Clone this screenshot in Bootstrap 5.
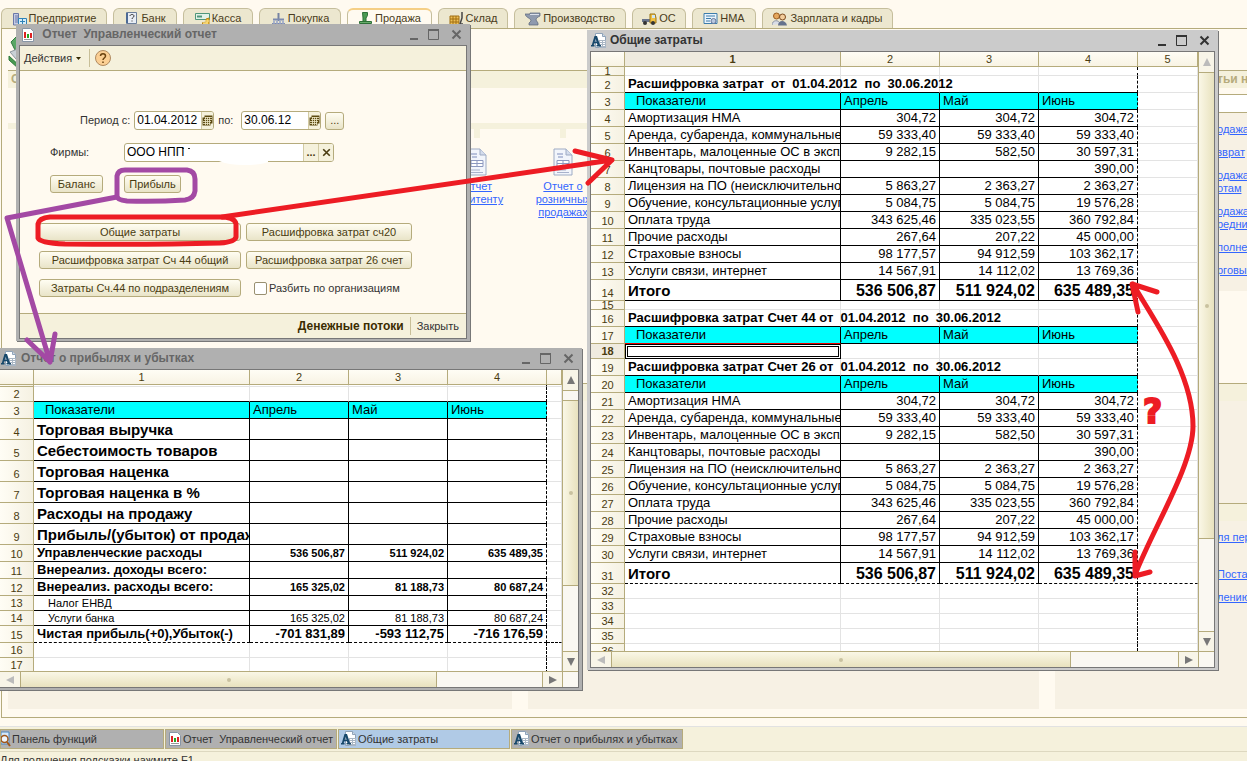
<!DOCTYPE html>
<html lang="ru">
<head>
<meta charset="utf-8">
<meta name="viewport" content="width=device-width, initial-scale=1">
<title>Управленческий отчет</title>
<link rel="stylesheet" href="https://cdn.jsdelivr.net/npm/bootstrap@5.3.0/dist/css/bootstrap.min.css">
<style>
:root{--cream:#fffaf0;--band:#f5f1dc;--beige:#f7f1e4;--line:#b5ab7c;--ink:#4a3c10}
body{font:11px/13px "Liberation Sans",Arial,sans-serif;color:#333;background:var(--cream)}
button,input{font:inherit;color:inherit}
a{color:#3366ff}
svg{flex:none;display:block}

/* section tabs */
.tabstrip{height:28px;padding:8px 0 0 1px;gap:6px}
.tabstrip .nav-link{height:20px;padding:3px 0 0;gap:2px;color:#4a3c20;background:#ece7cf;border:1px solid #c5be9c;border-bottom:0;border-radius:6px 6px 0 0;display:flex;justify-content:center;white-space:nowrap}
.tabstrip .nav-link.active{background:var(--cream);color:#4a3c20;border-top:2px solid #f5cf85;padding-top:2px;height:21px}
.w54{width:54px}.w64{width:64px}.w70{width:70px}.w82{width:82px}.w85{width:85px}.w106{width:106px}.w112{width:112px}.w131{width:131px}

/* function panel behind the windows */
.panel{margin-left:1px;border:1px solid var(--line);border-right:0;padding:0 0 8px 6px;gap:16px;min-height:0}
.band{background:var(--band);border-top:1px solid var(--line);color:var(--line);font-weight:700;font-size:12px;height:18px;line-height:17px;padding-left:3px;white-space:nowrap;flex:none}
.headrow{height:41px;padding-top:6px;flex:none}
.leftpart{flex:1031}
.rightpart{flex:192;overflow:hidden}
.flowmap{height:295px;padding-top:35px}
.flowmap .rail{border-top:6px solid var(--band);padding-left:426px}
.flowmap .stop{width:86px;text-align:center}
.flowmap .stop::before{content:"";display:block;width:6px;height:9px;background:var(--band);margin:0 auto 10px}
.flowmap .stop svg{margin:0 auto 4px}
.lists{gap:16px}
.fill{background:var(--beige)}
.lists a,.rightpart a{display:block;white-space:nowrap}
.rightpart .links{padding:10px 0 0 162px}
.rightpart .links a{margin-bottom:10px}
.blank{background:#fff;border:solid var(--line);border-width:1px 0;height:19px;margin-top:6px}

/* task bar and status bar */
.taskbar{background:var(--band);border-top:1px solid #e2e2e2;padding-top:2px;height:25px;gap:1px}
.taskbar button{width:172px;height:20px;border:1px solid var(--line);background:#b0b0b0;color:#333;padding:0 2px;gap:1px;text-align:left;white-space:nowrap}
.taskbar button:first-child{width:164px;padding-left:0}
.taskbar button.on{background:#b0cae6}
.status{height:10px;border-top:1px solid #ddd8c0;background:var(--band);line-height:17px;white-space:nowrap;overflow:hidden}

/* windows */
.win{position:absolute;background:#b0b0b0;padding:0 3px 2px;box-shadow:1px 1px 0 #777}
.win.front{background:#cbcbcb}
.win .titlebar{height:21px;color:#666;font-size:12px;font-weight:700;gap:4px;padding:0 5px 0 2px;white-space:nowrap}
.win.front .titlebar{color:#333;gap:3px;padding-left:1px}
.win .titlebar button{border:0;background:none;padding:0;width:11px;height:11px}
.client{border:1px solid #777;background:var(--cream)}
#w-form{left:16px;top:24px;width:454px}
#w-cost{left:587px;top:30px;width:631px}
#w-profit{left:-4px;top:348px;width:586px}

/* report form */
.toolbar{height:25px;background:var(--band);border-bottom:1px solid var(--line);padding:0 4px}
.toolbar button,.foot button{border:0;background:none;padding:0;white-space:nowrap}
.sep{width:1px;height:18px;background:#c8bf98}
.fbody{padding:40px 19px 16px}
.fbody label{white-space:nowrap}
.field{height:19px;border:1px solid var(--line);border-radius:3px;background:#fff;overflow:hidden}
.field input{border:0;padding:0 2px;min-width:0;background:none;color:#000;outline:0;font-size:12px}
.field button{border:0;border-left:1px solid #d3cba4;background:#f5f1dc;width:15px;padding:0;color:var(--ink);font-weight:700}
.btn1c{height:18px;border:1px solid var(--line);border-radius:3px;background:linear-gradient(#fffdf2,#e9e4c8);color:var(--ink);padding:0;white-space:nowrap;line-height:15px}
.date{width:80px}.firm{width:210px}.bw18{width:19px}.bw52{width:53px}.bw56{width:57px}.bw202{width:202px}.bw166{width:166px}
.form-check-input.org{width:13px;height:13px;margin:0;border:1px solid #999071;border-radius:2px}
.foot{height:25px;border-top:1px solid var(--line);background:var(--band);padding:0 7px;gap:6px}
.foot b{font-size:12px;color:#3b2c00}

/* spreadsheets */
.sheet{overflow:hidden;background:#fff;min-width:0}
.grid{table-layout:fixed;border-collapse:separate;border-spacing:0;width:100%;color:#000;font-size:13px;line-height:16px}
.grid th,.grid td{padding:0 3px;overflow:hidden;white-space:nowrap;border:solid #e3e3e3;border-width:0 1px 1px 0;vertical-align:bottom;text-align:right}
.grid th{background:linear-gradient(90deg,#fffdf5,#f5f1e2);border-color:var(--line);font-size:11px;font-weight:400;text-align:center;color:var(--ink);line-height:14px}
.grid thead th{background:linear-gradient(#fffdf5,#f8f3e4);height:15px;line-height:14px}
.grid tr .sel{font-weight:700;background:#efebdf}
.grid td:nth-child(2){text-align:left}
.grid td:nth-child(5){border-right:1px dashed #000}
.h2 th,.h2 td{height:2px;line-height:1px}
.h9 th,.h9 td{height:9px;line-height:8px}
.grid .h9 th{line-height:7px}
.h15 th,.h15 td{height:15px;line-height:14px}
.h17 th,.h17 td{height:17px}
.h21 th,.h21 td{height:21px}
.k td:nth-child(n+2):nth-child(-n+5){border-bottom-color:#000}
.k td:nth-child(n+2):nth-child(-n+4){border-right-color:#000}
.grid .cy td:nth-child(n+2):nth-child(-n+5){background:#0ff;text-align:left}
.grid .cy td:nth-child(2){padding-left:11px}
.grid .top td:nth-child(n+2):nth-child(-n+5){border-bottom-color:#000}
.grid .cap td:nth-child(2){overflow:visible;font-weight:700}
.total td{font-weight:700;font-size:16px;line-height:19px}
.total td:nth-child(2),.big td{font-weight:700;font-size:15px;line-height:19px}
.grid .dash td{border-bottom:1px dashed #000}
.bld td{font-weight:700;font-size:11px}
.bld td:nth-child(2),.net td{font-weight:700;font-size:13px}
.sm td{font-size:11px}
.grid .sm td:nth-child(2){padding-left:14px}
.grid .cur{border:1px solid #000;box-shadow:inset 0 0 0 1px #fff,inset 0 0 0 2px #000}
.grid .cy td.redline{border-bottom-color:#e00}
.c-n{width:34px}.c-1{width:216px}.c-v{width:99px}

.vbar{flex:none;width:16px;border-left:1px solid var(--line);background:#faf8f2}
.hbar{height:16px;border-top:1px solid var(--line);background:#faf8f2}
.vbar button,.hbar button{border:0;padding:0;background:#f8f5e8;display:flex;align-items:center;justify-content:center}
.vbar button{height:20px}
.hbar button{width:20px}
.vbar .thumb{background:linear-gradient(90deg,#faf7e6,#e8e2be);border:solid var(--line);border-width:1px 0}
.hbar .thumb{background:linear-gradient(#faf7e6,#e8e2be);border:solid var(--line);border-width:0 1px}
.vbar button:last-child{border-top:1px solid var(--line)}
.hbar button:nth-child(3){border-left:1px solid var(--line)}
.dot{width:4px;height:4px;border-radius:2px;background:#c9c2a0}
#w-cost .sheet{height:599px}#w-profit .sheet{height:301px}
#w-cost .vbar .thumb{height:467px}
#w-profit .vbar .track{height:10px;border-top:1px solid var(--line)}
#w-profit .vbar .thumb{height:186px}
#w-cost .hbar .thumb{width:460px}
#w-profit .hbar .thumb{width:417px}
.corner{width:16px;border-left:1px solid var(--line)}

/* hand-drawn notes */
.notes{position:absolute;left:0;top:0;pointer-events:none;fill:none;stroke-linecap:round;stroke-linejoin:round}
.query{position:absolute;left:1143px;top:394px;font:700 33px/36px "DejaVu Sans",sans-serif;color:#ed1c24;-webkit-text-stroke:2px #ed1c24}
</style>
</head>
<body class="vh-100 d-flex flex-column overflow-hidden position-relative">

<svg width="0" height="0" class="position-absolute" aria-hidden="true">
  <symbol id="i-sheet" viewBox="0 0 16 16"><path d="M4.500.500h7l3 3v11h-10z" fill="#fff" stroke="#8fa3b8"/><path d="M11.500.500v3h3" fill="#cfdbe8" stroke="#8fa3b8"/><path d="M8 7h7v8H8z" fill="#a9b6c4"/><path d="M9 8h2v1H9zM12 8h2v1h-2zM9 10h2v1H9zM12 10h2v1h-2zM9 12h2v1H9zM12 12h2v1h-2z" fill="#fff"/><path d="M3.500 3h2.500l3 9h1v1.500H5.500V12h1l-.600-1.800H3.300L2.700 12h.800v1.500H0V12h.800zM4.600 5.500L3.700 8.800h1.800z" fill="#17486b" fill-rule="evenodd"/></symbol>
  <symbol id="i-chart" viewBox="0 0 14 14"><path d="M1.500.500h8l3 3v10h-11z" fill="#fff" stroke="#8795a5"/><path d="M4 4v6" stroke="#d22" stroke-width="2"/><path d="M7 6v4" stroke="#2a2" stroke-width="2"/><path d="M10 5v5" stroke="#d22" stroke-width="2"/><path d="M3 11.500h8" stroke="#999"/></symbol>
  <symbol id="i-doc" viewBox="0 0 22 28"><path d="M2 1h12l6 6v20H2z" fill="#f2f5fb" stroke="#9eabc4"/><path d="M14 1v6h6" fill="#d4dcec" stroke="#9eabc4"/><path d="M5 6h6M6 9h5" stroke="#7f8dbb"/><path d="M5 12.500h12v6H5zM5 15.500h12M11 12.500v6" fill="#fff" stroke="#8c98bf"/><path d="M5 22h9M5 24.500h12" stroke="#a8b2cc"/></symbol>
  <symbol id="i-min" viewBox="0 0 11 11"><path d="M1 10h8" stroke="currentColor" stroke-width="2"/></symbol>
  <symbol id="i-max" viewBox="0 0 11 11"><path d="M.500 1v9.500h10V1" stroke="currentColor" fill="none"/><path d="M0 1h11" stroke="currentColor" stroke-width="2"/></symbol>
  <symbol id="i-x" viewBox="0 0 11 11"><path d="M1.500 1.500l8 8m0-8l-8 8" stroke="currentColor" stroke-width="2"/></symbol>
  <symbol id="i-cal" viewBox="0 0 11 11"><path d="M2.500.500h8v8h-2v2h-8v-8h2z" fill="#5c4a12"/><path d="M2 4.500h8M1 6.500h8M1 8.500h7M3.500 2v8M5.500 2v8M7.500 2v8M3 2.500h7" stroke="#efe9c8" stroke-width=".8"/></symbol>
</svg>

<nav class="tabstrip nav flex-nowrap flex-shrink-0">
  <a class="nav-link w106" href="#"><svg width="15" height="14" viewBox="0 0 15 14"><path d="M1.500 13V1.500h5V13z" fill="#c4cbe4" stroke="#6b78a8"/><path d="M3 4h3M3 6h3M3 8h3M3 10h3" stroke="#6b78a8"/><path d="M6.500 13V6.500h8V13z" fill="#d6ecf8" stroke="#2f83b8"/><path d="M8 9.500h5M10.500 7v6" stroke="#2f83b8"/></svg>Предприятие</a>
  <a class="nav-link w64" href="#"><svg width="15" height="13" viewBox="0 0 15 13"><path d="M2.500.500h10v11h-10z" fill="#e8edf5" stroke="#6c7f9b"/><path d="M3 1v10" stroke="#4c6a95" stroke-width="2"/><path d="M6 4c0-2 4-2 4 0 0 1.500-2 1.500-2 3M8 8.500v1" stroke="#333" fill="none"/></svg>Банк</a>
  <a class="nav-link w70" href="#"><svg width="15" height="14" viewBox="0 0 15 14"><path d="M.500 1.500h14v6H.500z" fill="#e2f2e8" stroke="#4f977a"/><path d="M2 4.500h5" stroke="#4f977a" stroke-width="2"/><path d="M7 11l2 2h5V6l-3 1v3z" fill="#f2bd39" stroke="#ba8413"/><path d="M8 11h5M10 9h4" stroke="#fff0a8"/></svg>Касса</a>
  <a class="nav-link w82" href="#"><svg width="15" height="14" viewBox="0 0 15 14"><path d="M7.500 1v8" stroke="#7683a3" stroke-width="2"/><path d="M2 7.500h11M1 12h13" stroke="#7d8bb0" stroke-width="2"/><path d="M2 10h12" stroke="#a9b3cb" stroke-dasharray="2 1" stroke-width="3"/></svg>Покупка</a>
  <a class="nav-link active w85" href="#"><svg width="15" height="14" viewBox="0 0 15 14"><path d="M4.500.500h5v3L8 6v3.500H5V6z" fill="#4a9a52" stroke="#2e7038"/><path d="M1.500 9.500h12v2h-12z" fill="#68ae6c" stroke="#2e7038"/></svg>Продажа</a>
  <a class="nav-link w70" href="#"><svg width="15" height="14" viewBox="0 0 15 14"><path d="M1 4h9v9H1z" fill="#efc057" stroke="#a06e12"/><path d="M1 7h9M1 10h9M4 4v9M7 4v9" stroke="#a06e12"/><path d="M13 0v6l-2 6h3" stroke="#444" stroke-width="1.500" fill="none"/></svg>Склад</a>
  <a class="nav-link w112" href="#"><svg width="16" height="14" viewBox="0 0 16 14"><path d="M0 2h5V1h10v3c-2 1-4 2-4 4l2 3v2H4v-2l2-2c0-3-5-3-6-7z" fill="#8f9aae" stroke="#59647a" stroke-width=".7"/><path d="M5 2.500h9" stroke="#dbe0ea"/></svg>Производство</a>
  <a class="nav-link w54" href="#"><svg width="15" height="14" viewBox="0 0 15 14"><path d="M0 7h8v3H0z" fill="#68748c"/><path d="M8 2h5l1 4v5H8z" fill="#f0c044" stroke="#9b7414"/><path d="M10 3h3v3h-3z" fill="#cfe6f5"/><circle cx="3" cy="11" r="2" fill="#333"/><circle cx="11" cy="11" r="2" fill="#333"/></svg>ОС</a>
  <a class="nav-link w64" href="#"><svg width="15" height="14" viewBox="0 0 15 14"><path d="M1 1.500h13v10H1z" fill="#e9f3fb" stroke="#3c7dac"/><path d="M3 4h9M3 6.500h5M3 9h4" stroke="#3c7dac"/><circle cx="10.500" cy="9" r="2.500" fill="#b8c8e0" stroke="#68799c"/></svg>НМА</a>
  <a class="nav-link w131" href="#"><svg width="16" height="14" viewBox="0 0 16 14"><circle cx="4.500" cy="4" r="3" fill="#e5a75e" stroke="#9a5d20"/><path d="M0 13c0-5 7-6 8-1" fill="#d9dde6" stroke="#8e96a6"/><circle cx="10.500" cy="5" r="3" fill="#f3cd9c" stroke="#7c4a1e"/><path d="M6 13.500c0-6 8-6 9 0z" fill="#65728c"/></svg>Зарплата и кадры</a>
</nav>

<main class="panel d-flex flex-grow-1">
  <section class="leftpart d-flex flex-column">
    <div class="headrow"><svg width="28" height="34" viewBox="0 0 28 34"><path d="M3 7l6-6 9 8-9 10z" fill="#5aa765" stroke="#2f7a3f"/><path d="M2 17l10-4 12 12-10 6z" fill="#c9d0d6" stroke="#8e979f"/><path d="M1 21l12 11 12-8v4l-10 6H11L1 25z" fill="#4a9a52" stroke="#2f7a3f"/></svg></div>
    <div class="band">Операции</div>
    <div class="flowmap flex-shrink-0">
      <div class="rail d-flex">
        <div class="stop"><svg width="22" height="28"><use href="#i-doc"/></svg><a href="#">Отчет<br>комитенту</a></div>
        <div class="stop"><svg width="22" height="28"><use href="#i-doc"/></svg><a href="#">Отчет о<br>розничных<br>продажах</a></div>
      </div>
    </div>
    <div class="lists d-flex flex-grow-1">
      <div class="fill" style="flex:504"><div class="band"></div></div>
      <div class="fill" style="flex:511"><div class="band"></div></div>
    </div>
  </section>
  <section class="rightpart d-flex flex-column">
    <div class="headrow"></div>
    <div class="band" style="padding-left:162px">тьи н</div>
    <div class="blank flex-shrink-0"></div>
    <div class="fill links flex-shrink-0" style="height:178px">
      <a href="#">одажа</a><a href="#">зврат </a><a href="#">одажа<br>отам</a><a href="#">одажа<br>редни</a><a href="#">полне</a><a href="#">рговые</a>
    </div>
    <div class="flex-shrink-0" style="height:92px"></div>
    <div class="fill flex-shrink-0" style="height:120px"><div class="band"></div></div>
    <div class="fill flex-grow-1"><div class="band"></div>
      <div class="links"><a href="#">ля пер</a><a href="#" class="mt-4">Постан</a><a href="#">лению</a></div>
    </div>
  </section>
</main>

<footer class="flex-shrink-0 pt-2">
  <div class="taskbar d-flex">
    <button type="button" class="d-flex align-items-center"><svg width="10" height="16" viewBox="0 0 10 16"><path d="M0 1h8v12H0z" fill="#d7e8f8" stroke="#4d86c0"/><circle cx="3.500" cy="8" r="3.500" fill="#eef6ff" stroke="#a0571c" stroke-width="1.500"/><path d="M6 11l3 4" stroke="#a0571c" stroke-width="2"/></svg>Панель функций</button>
    <button type="button" class="d-flex align-items-center"><svg width="14" height="14"><use href="#i-chart"/></svg>Отчет&nbsp; Управленческий отчет</button>
    <button type="button" class="d-flex align-items-center on"><svg width="16" height="16"><use href="#i-sheet"/></svg>Общие затраты</button>
    <button type="button" class="d-flex align-items-center"><svg width="16" height="16"><use href="#i-sheet"/></svg>Отчет о прибылях и убытках</button>
  </div>
  <div class="status">Для получения подсказки нажмите F1</div>
</footer>

<section class="win" id="w-form">
  <div class="titlebar d-flex align-items-center">
    <svg width="14" height="14"><use href="#i-chart"/></svg><span class="flex-grow-1">&nbsp;Отчет&nbsp; Управленческий отчет</span>
    <div class="d-flex gap-2"><button type="button" aria-label="Свернуть"><svg width="11" height="11"><use href="#i-min"/></svg></button><button type="button" aria-label="Развернуть"><svg width="11" height="11"><use href="#i-max"/></svg></button><button type="button" aria-label="Закрыть окно" class="ms-1"><svg width="11" height="11"><use href="#i-x"/></svg></button></div>
  </div>
  <form class="client">
    <div class="toolbar d-flex align-items-center gap-1">
      <button type="button" class="d-flex align-items-center gap-1">Действия <svg width="5" height="3"><path d="M0 0h5L2.500 3z" fill="#332800"/></svg></button>
      <div class="sep ms-1"></div>
      <button type="button" aria-label="Справка"><svg width="18" height="18" viewBox="0 0 18 18"><circle cx="9" cy="9" r="7.500" fill="#fbcf94" stroke="#b08a60"/><path d="M6.500 7c0-3 5-3 5 0 0 2-2.500 2-2.500 4M9 12.500v1.500" stroke="#6b4310" stroke-width="1.500" fill="none"/></svg></button>
    </div>
    <div class="fbody">
      <div class="d-flex align-items-center" style="padding-left:41px">
        <label for="d1" class="pe-1">Период с:</label>
        <div class="field date d-flex"><input id="d1" class="flex-grow-1" value="01.04.2012"><button type="button" aria-label="Выбрать дату начала" class="d-flex align-items-center justify-content-center"><svg width="11" height="11"><use href="#i-cal"/></svg></button></div>
        <label for="d2" class="ps-1 pe-2">по:</label>
        <div class="field date d-flex"><input id="d2" class="flex-grow-1" value="30.06.12"><button type="button" aria-label="Выбрать дату конца" class="d-flex align-items-center justify-content-center"><svg width="11" height="11"><use href="#i-cal"/></svg></button></div>
        <button type="button" class="btn1c bw18 ms-1">...</button>
      </div>
      <div class="d-flex align-items-center" style="padding:13px 0 13px 11px">
        <label for="firm" style="width:74px">Фирмы:</label>
        <div class="field firm d-flex"><input id="firm" class="flex-grow-1" value="ООО НПП"><button type="button">...</button><button type="button" aria-label="Очистить" class="d-flex align-items-center justify-content-center"><svg width="9" height="9" viewBox="0 0 11 11"><use href="#i-x"/></svg></button></div>
      </div>
      <div class="d-flex" style="padding:0 0 30px 11px;gap:21px"><button type="button" class="btn1c bw52">Баланс</button><button type="button" class="btn1c bw56">Прибыль</button></div>
      <div class="d-flex flex-column" style="gap:10px">
        <div class="d-flex" style="gap:5px"><button type="button" class="btn1c bw202">Общие затраты</button><button type="button" class="btn1c bw166">Расшифровка затрат сч20</button></div>
        <div class="d-flex" style="gap:5px"><button type="button" class="btn1c bw202">Расшифровка затрат Сч 44 общий</button><button type="button" class="btn1c bw166">Расшифровка затрат 26 счет</button></div>
        <div class="d-flex align-items-center" style="gap:13px"><button type="button" class="btn1c bw202">Затраты Сч.44 по подразделениям</button><div class="d-flex align-items-center" style="gap:2px"><input type="checkbox" id="org" class="form-check-input org"><label for="org">Разбить по организациям</label></div></div>
      </div>
    </div>
    <div class="foot d-flex align-items-center justify-content-end"><button type="button"><b>Денежные потоки</b></button><div class="sep"></div><button type="button">Закрыть</button></div>
  </form>
</section>

<section class="win" id="w-profit">
  <div class="titlebar d-flex align-items-center">
    <svg width="16" height="16"><use href="#i-sheet"/></svg><span class="flex-grow-1">Отчет о прибылях и убытках</span>
    <div class="d-flex gap-2"><button type="button" aria-label="Свернуть"><svg width="11" height="11"><use href="#i-min"/></svg></button><button type="button" aria-label="Развернуть"><svg width="11" height="11"><use href="#i-max"/></svg></button><button type="button" aria-label="Закрыть окно" class="ms-1"><svg width="11" height="11"><use href="#i-x"/></svg></button></div>
  </div>
  <div class="client">
    <div class="d-flex">
      <div class="sheet flex-grow-1">
        <table class="grid">
          <colgroup><col class="c-n"><col class="c-1"><col class="c-v"><col class="c-v"><col class="c-v"><col></colgroup>
          <thead><tr><th></th><th>1</th><th>2</th><th>3</th><th>4</th><th></th></tr></thead>
          <tbody>
            <tr class="h2"><th></th><td></td><td></td><td></td><td></td><td></td></tr>
            <tr class="h15 top"><th>2</th><td></td><td></td><td></td><td></td><td></td></tr>
            <tr class="h17 k cy"><th>3</th><td>Показатели</td><td>Апрель</td><td>Май</td><td>Июнь</td><td></td></tr>
            <tr class="h21 k big"><th>4</th><td>Торговая выручка</td><td></td><td></td><td></td><td></td></tr>
            <tr class="h21 k big"><th>5</th><td>Себестоимость товаров</td><td></td><td></td><td></td><td></td></tr>
            <tr class="h21 k big"><th>6</th><td>Торговая наценка</td><td></td><td></td><td></td><td></td></tr>
            <tr class="h21 k big"><th>7</th><td>Торговая наценка в %</td><td></td><td></td><td></td><td></td></tr>
            <tr class="h21 k big"><th>8</th><td>Расходы на продажу</td><td></td><td></td><td></td><td></td></tr>
            <tr class="h21 k big"><th>9</th><td>Прибыль/(убыток) от продаж</td><td></td><td></td><td></td><td></td></tr>
            <tr class="h17 k bld"><th>10</th><td>Управленческие расходы</td><td>536 506,87</td><td>511 924,02</td><td>635 489,35</td><td></td></tr>
            <tr class="h17 k bld"><th>11</th><td>Внереализ. доходы всего:</td><td></td><td></td><td></td><td></td></tr>
            <tr class="h17 k bld"><th>12</th><td>Внереализ. расходы всего:</td><td>165 325,02</td><td>81 188,73</td><td>80 687,24</td><td></td></tr>
            <tr class="h15 k sm"><th>13</th><td>Налог ЕНВД</td><td></td><td></td><td></td><td></td></tr>
            <tr class="h15 k sm"><th>14</th><td>Услуги банка</td><td>165 325,02</td><td>81 188,73</td><td>80 687,24</td><td></td></tr>
            <tr class="h17 k net dash"><th>15</th><td>Чистая прибыль(+0),Убыток(-)</td><td>-701 831,89</td><td>-593 112,75</td><td>-716 176,59</td><td></td></tr>
            <tr class="h15"><th>16</th><td></td><td></td><td></td><td></td><td></td></tr>
            <tr class="h15"><th>17</th><td></td><td></td><td></td><td></td><td></td></tr>
          </tbody>
        </table>
      </div>
      <div class="vbar d-flex flex-column"><button type="button" aria-label="Вверх"><svg width="8" height="8"><path d="M4 0l4 8H0z" fill="#777"/></svg></button><div class="track"></div><div class="thumb d-flex align-items-center justify-content-center"><div class="dot"></div></div><button type="button" aria-label="Вниз" class="mt-auto"><svg width="8" height="8"><path d="M4 8l4-8H0z" fill="#777"/></svg></button></div>
    </div>
    <div class="hbar d-flex"><button type="button" aria-label="Влево"><svg width="8" height="8"><path d="M0 4l8-4v8z" fill="#bbb"/></svg></button><div class="thumb d-flex align-items-center justify-content-center"><div class="dot"></div></div><button type="button" aria-label="Вправо" class="ms-auto"><svg width="8" height="8"><path d="M8 4L0 0v8z" fill="#777"/></svg></button><div class="corner"></div></div>
  </div>
</section>

<section class="win front" id="w-cost">
  <div class="titlebar d-flex align-items-center">
    <svg width="16" height="16"><use href="#i-sheet"/></svg><span class="flex-grow-1">Общие затраты</span>
    <div class="d-flex gap-2"><button type="button" aria-label="Свернуть"><svg width="11" height="11"><use href="#i-min"/></svg></button><button type="button" aria-label="Развернуть"><svg width="11" height="11"><use href="#i-max"/></svg></button><button type="button" aria-label="Закрыть окно" class="ms-1"><svg width="11" height="11"><use href="#i-x"/></svg></button></div>
  </div>
  <div class="client">
    <div class="d-flex">
      <div class="sheet flex-grow-1">
        <table class="grid">
          <colgroup><col class="c-n"><col class="c-1"><col class="c-v"><col class="c-v"><col class="c-v"><col></colgroup>
          <thead><tr><th></th><th class="sel">1</th><th>2</th><th>3</th><th>4</th><th>5</th></tr></thead>
          <tbody>
            <tr class="h9"><th>1</th><td></td><td></td><td></td><td></td><td></td></tr>
            <tr class="h17 cap top"><th>2</th><td>Расшифровка затрат&nbsp; от&nbsp; 01.04.2012&nbsp; по&nbsp; 30.06.2012</td><td></td><td></td><td></td><td></td></tr>
            <tr class="h17 k cy"><th>3</th><td>Показатели</td><td>Апрель</td><td>Май</td><td>Июнь</td><td></td></tr>
            <tr class="h17 k"><th>4</th><td>Амортизация НМА</td><td>304,72</td><td>304,72</td><td>304,72</td><td></td></tr>
            <tr class="h17 k"><th>5</th><td>Аренда, субаренда, коммунальные</td><td>59 333,40</td><td>59 333,40</td><td>59 333,40</td><td></td></tr>
            <tr class="h17 k"><th>6</th><td>Инвентарь, малоценные ОС в экспл</td><td>9 282,15</td><td>582,50</td><td>30 597,31</td><td></td></tr>
            <tr class="h17 k"><th>7</th><td>Канцтовары, почтовые расходы</td><td></td><td></td><td>390,00</td><td></td></tr>
            <tr class="h17 k"><th>8</th><td>Лицензия на ПО (неисключительно</td><td>5 863,27</td><td>2 363,27</td><td>2 363,27</td><td></td></tr>
            <tr class="h17 k"><th>9</th><td>Обучение, консультационные услуг</td><td>5 084,75</td><td>5 084,75</td><td>19 576,28</td><td></td></tr>
            <tr class="h17 k"><th>10</th><td>Оплата труда</td><td>343 625,46</td><td>335 023,55</td><td>360 792,84</td><td></td></tr>
            <tr class="h17 k"><th>11</th><td>Прочие расходы</td><td>267,64</td><td>207,22</td><td>45 000,00</td><td></td></tr>
            <tr class="h17 k"><th>12</th><td>Страховые взносы</td><td>98 177,57</td><td>94 912,59</td><td>103 362,17</td><td></td></tr>
            <tr class="h17 k"><th>13</th><td>Услуги связи, интернет</td><td>14 567,91</td><td>14 112,02</td><td>13 769,36</td><td></td></tr>
            <tr class="h21 k total"><th>14</th><td>Итого</td><td>536 506,87</td><td>511 924,02</td><td>635 489,35</td><td></td></tr>
            <tr class="h9"><th>15</th><td></td><td></td><td></td><td></td><td></td></tr>
            <tr class="h17 cap top"><th>16</th><td>Расшифровка затрат Счет 44 от&nbsp; 01.04.2012&nbsp; по&nbsp; 30.06.2012</td><td></td><td></td><td></td><td></td></tr>
            <tr class="h17 k cy"><th>17</th><td class="redline">Показатели</td><td>Апрель</td><td>Май</td><td>Июнь</td><td></td></tr>
            <tr class="h15"><th class="sel">18</th><td class="cur"></td><td></td><td></td><td></td><td></td></tr>
            <tr class="h17 cap top"><th>19</th><td>Расшифровка затрат Счет 26 от&nbsp; 01.04.2012&nbsp; по&nbsp; 30.06.2012</td><td></td><td></td><td></td><td></td></tr>
            <tr class="h17 k cy"><th>20</th><td>Показатели</td><td>Апрель</td><td>Май</td><td>Июнь</td><td></td></tr>
            <tr class="h17 k"><th>21</th><td>Амортизация НМА</td><td>304,72</td><td>304,72</td><td>304,72</td><td></td></tr>
            <tr class="h17 k"><th>22</th><td>Аренда, субаренда, коммунальные</td><td>59 333,40</td><td>59 333,40</td><td>59 333,40</td><td></td></tr>
            <tr class="h17 k"><th>23</th><td>Инвентарь, малоценные ОС в экспл</td><td>9 282,15</td><td>582,50</td><td>30 597,31</td><td></td></tr>
            <tr class="h17 k"><th>24</th><td>Канцтовары, почтовые расходы</td><td></td><td></td><td>390,00</td><td></td></tr>
            <tr class="h17 k"><th>25</th><td>Лицензия на ПО (неисключительно</td><td>5 863,27</td><td>2 363,27</td><td>2 363,27</td><td></td></tr>
            <tr class="h17 k"><th>26</th><td>Обучение, консультационные услуг</td><td>5 084,75</td><td>5 084,75</td><td>19 576,28</td><td></td></tr>
            <tr class="h17 k"><th>27</th><td>Оплата труда</td><td>343 625,46</td><td>335 023,55</td><td>360 792,84</td><td></td></tr>
            <tr class="h17 k"><th>28</th><td>Прочие расходы</td><td>267,64</td><td>207,22</td><td>45 000,00</td><td></td></tr>
            <tr class="h17 k"><th>29</th><td>Страховые взносы</td><td>98 177,57</td><td>94 912,59</td><td>103 362,17</td><td></td></tr>
            <tr class="h17 k"><th>30</th><td>Услуги связи, интернет</td><td>14 567,91</td><td>14 112,02</td><td>13 769,36</td><td></td></tr>
            <tr class="h21 k total dash"><th>31</th><td>Итого</td><td>536 506,87</td><td>511 924,02</td><td>635 489,35</td><td></td></tr>
            <tr class="h15"><th>32</th><td></td><td></td><td></td><td></td><td></td></tr>
            <tr class="h15"><th>33</th><td></td><td></td><td></td><td></td><td></td></tr>
            <tr class="h15"><th>34</th><td></td><td></td><td></td><td></td><td></td></tr>
            <tr class="h15"><th>35</th><td></td><td></td><td></td><td></td><td></td></tr>
            <tr class="h15"><th>36</th><td></td><td></td><td></td><td></td><td></td></tr>
          </tbody>
        </table>
      </div>
      <div class="vbar d-flex flex-column"><button type="button" aria-label="Вверх"><svg width="8" height="8"><path d="M4 0l4 8H0z" fill="#bbb"/></svg></button><div class="thumb d-flex align-items-center justify-content-center"><div class="dot"></div></div><button type="button" aria-label="Вниз" class="mt-auto"><svg width="8" height="8"><path d="M4 8l4-8H0z" fill="#777"/></svg></button></div>
    </div>
    <div class="hbar d-flex"><button type="button" aria-label="Влево"><svg width="8" height="8"><path d="M0 4l8-4v8z" fill="#bbb"/></svg></button><div class="thumb d-flex align-items-center justify-content-center"><div class="dot"></div></div><button type="button" aria-label="Вправо" class="ms-auto"><svg width="8" height="8"><path d="M8 4L0 0v8z" fill="#777"/></svg></button><div class="corner"></div></div>
  </div>
</section>

<svg class="notes" width="1247" height="761" viewBox="0 0 1247 761" aria-hidden="true">
  <path d="M182 148.500h2M188 148.500h2" stroke="#222" stroke-linecap="butt"/>
  <path d="M219 159h49v3q-8 3-24 3t-25-4z" fill="#fff"/>
  <g stroke="#a349a4" stroke-width="5">
    <path d="M117 196V176q1-6 8-6h62q8 1 8 9v12q-1 8-10 9-30 2-58 1-10-1-10-5"/>
    <path d="M117 197L7 218l43 144M27 340l23 22 5-28"/>
  </g>
  <g stroke="#ed1c24" stroke-width="5">
    <path d="M50 217h170q15 0 16 7v13q-1 5-16 6-70 2-155 1-25-1-27-6v-14q1-6 12-7z"/>
    <path d="M222 217L612 160M575 151l37 9-24 23"/>
    <path d="M1133 284c18 32 60 88 60 142 0 40-40 102-58 149M1157 292l-25-8 6 28M1135 552v24l15-4"/>
  </g>
</svg>
<div class="query">?</div>

<script src="https://cdn.jsdelivr.net/npm/bootstrap@5.3.0/dist/js/bootstrap.bundle.min.js"></script>
</body>
</html>
